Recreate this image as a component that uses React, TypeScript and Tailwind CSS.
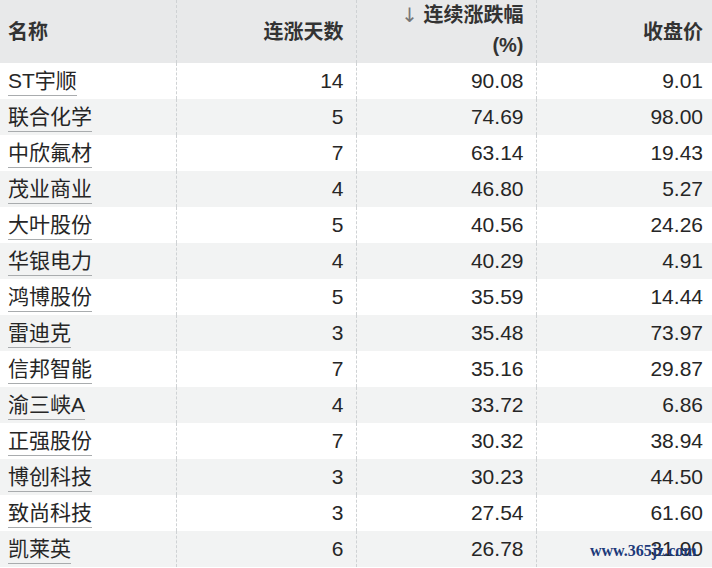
import React from 'react';

type Row = { name: string; days: string; pct: string; close: string };

const rows: Row[] = [
  { name: 'ST宇顺', days: '14', pct: '90.08', close: '9.01' },
  { name: '联合化学', days: '5', pct: '74.69', close: '98.00' },
  { name: '中欣氟材', days: '7', pct: '63.14', close: '19.43' },
  { name: '茂业商业', days: '4', pct: '46.80', close: '5.27' },
  { name: '大叶股份', days: '5', pct: '40.56', close: '24.26' },
  { name: '华银电力', days: '4', pct: '40.29', close: '4.91' },
  { name: '鸿博股份', days: '5', pct: '35.59', close: '14.44' },
  { name: '雷迪克', days: '3', pct: '35.48', close: '73.97' },
  { name: '信邦智能', days: '7', pct: '35.16', close: '29.87' },
  { name: '渝三峡A', days: '4', pct: '33.72', close: '6.86' },
  { name: '正强股份', days: '7', pct: '30.32', close: '38.94' },
  { name: '博创科技', days: '3', pct: '30.23', close: '44.50' },
  { name: '致尚科技', days: '3', pct: '27.54', close: '61.60' },
  { name: '凯莱英', days: '6', pct: '26.78', close: '31.90' }
];

const sep = 'border-r border-dashed border-[#cfd2d4]';

const App: React.FC = () => {
  return (
    <div className="relative h-[568px] w-[712px] overflow-hidden bg-white font-['Liberation_Sans','Noto_Sans_CJK_SC',sans-serif] text-[21px] text-[#262626]">
      <table className="w-[712px] table-fixed border-collapse">
        <colgroup>
          <col className="w-[176px]" />
          <col className="w-[180px]" />
          <col className="w-[180px]" />
          <col className="w-[176px]" />
        </colgroup>
        <thead>
          <tr className="h-[63px] bg-[#e8e9ea] text-[20px] font-bold text-[#333]">
            <th className={`px-2 text-left align-middle ${sep}`}>名称</th>
            <th className={`px-3 text-right align-middle ${sep}`}>连涨天数</th>
            <th className={`px-3 pb-[3px] text-right align-middle leading-[30px] ${sep}`}>
              <span className="font-['DejaVu_Sans',sans-serif] font-normal text-[#777]">↓</span> 连续涨跌幅
              <br />
              (%)
            </th>
            <th className="pr-[9px] text-right align-middle">收盘价</th>
          </tr>
        </thead>
        <tbody>
          {rows.map((r, i) => (
            <tr key={r.name} className={`h-9 ${i % 2 === 0 ? 'bg-white' : 'bg-[#f2f3f3]'}`}>
              <td className={`px-2 align-middle ${sep}`}>
                <span className="inline-block border-b border-[#a9acae] leading-[29px]">{r.name}</span>
              </td>
              <td className={`px-3 text-right align-middle ${sep}`}>{r.days}</td>
              <td className={`px-3 text-right align-middle ${sep}`}>{r.pct}</td>
              <td className="pr-[9px] text-right align-middle">{r.close}</td>
            </tr>
          ))}
        </tbody>
      </table>
      <div className="absolute left-[590px] top-[541px] font-['Liberation_Serif',serif] text-[16px] font-bold leading-[20px] text-[#1d3a7a]">
        www.365jz.com
      </div>
    </div>
  );
};

export default App;
